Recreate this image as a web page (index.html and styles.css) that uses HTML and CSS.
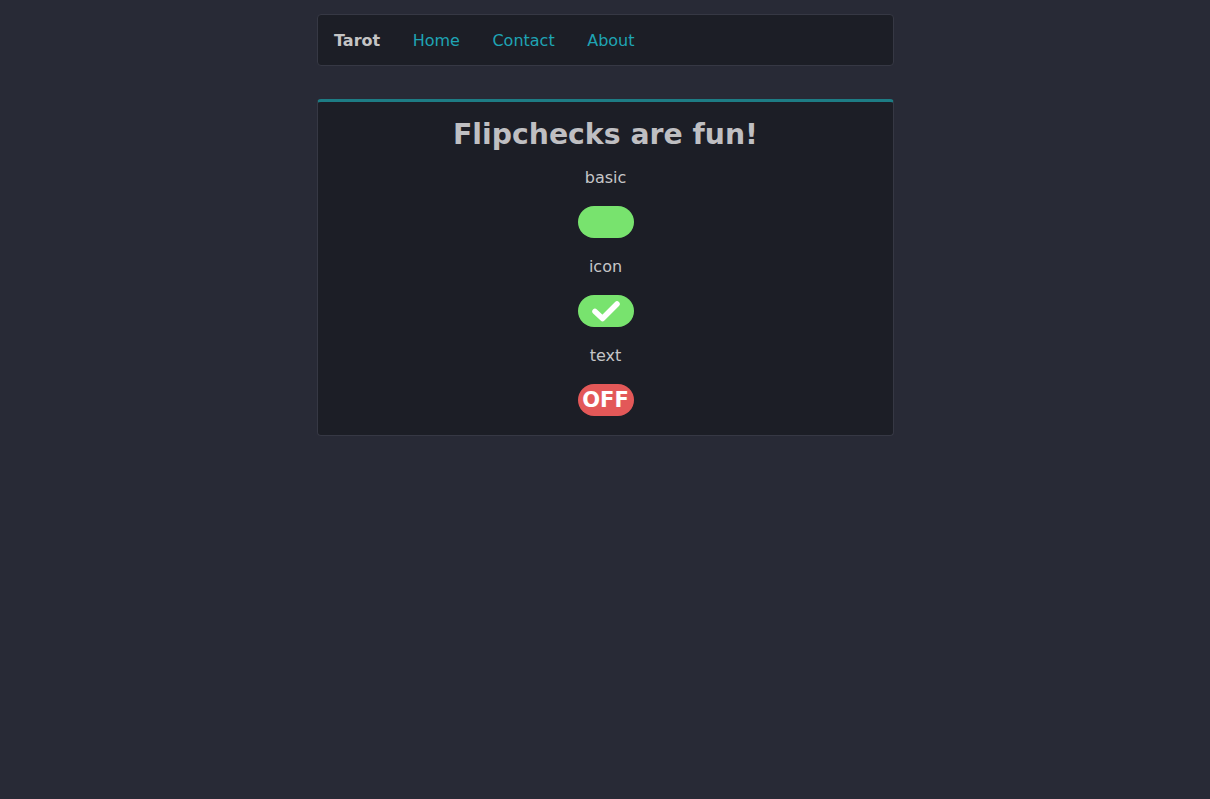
FILE: index.html
```html
<!DOCTYPE html>
<html>
<head>
<meta charset="utf-8">
<link rel="stylesheet" href="styles.css">
</head>
<body>
<div class="container">
  <nav class="navbar">
    <span class="brand">Tarot</span>
    <a class="nav-link" href="#">Home</a>
    <a class="nav-link" href="#">Contact</a>
    <a class="nav-link" href="#">About</a>
  </nav>
  <section class="card">
    <h1 class="title">Flipchecks are fun!</h1>
    <div class="label">basic</div>
    <div class="toggle toggle-on"></div>
    <div class="label">icon</div>
    <div class="toggle toggle-on">
      <svg class="check" viewBox="0 0 30 24" width="30" height="24"><path d="M4 12.5 L11.5 19.5 L26 5" fill="none" stroke="#fff" stroke-width="5.5" stroke-linecap="round" stroke-linejoin="round"/></svg>
    </div>
    <div class="label">text</div>
    <div class="toggle toggle-off"><span class="toggle-text">OFF</span></div>
  </section>
</div>
</body>
</html>
```
FILE: styles.css
```css
html, body {
  margin: 0;
  padding: 0;
  background: #282a36;
  font-family: "DejaVu Sans", sans-serif;
}
body {
  padding-top: 14px;
}
.container {
  width: 577px;
  margin: 0 auto;
  padding-left: 1px;
}
.navbar {
  display: flex;
  align-items: center;
  height: 50px;
  padding: 0 16px;
  background: #1c1e26;
  border: 1px solid #363844;
  border-radius: 4px;
  gap: 32.5px;
}
.brand {
  font-weight: bold;
  font-size: 16px;
  color: #c4c4c4;
}
.nav-link {
  color: #1fa4b4;
  text-decoration: none;
  font-size: 16px;
}
.card {
  margin-top: 33px;
  background: #1c1e26;
  border: 1px solid #363844;
  border-top: 3px solid #1d7c84;
  border-radius: 4px;
  padding: 16px 16px 19px;
  display: flex;
  flex-direction: column;
  align-items: center;
}
.title {
  margin: 0 0 14px;
  font-size: 28.3px;
  line-height: 34px;
  font-weight: bold;
  color: #bfbfc2;
}
.label {
  font-size: 16px;
  line-height: 24px;
  color: #c6c6c8;
  margin-bottom: 16px;
}
.toggle {
  width: 56px;
  height: 32px;
  border-radius: 16px;
  margin-bottom: 17px;
  display: flex;
  align-items: center;
  justify-content: center;
}
.toggle:last-child {
  margin-bottom: 0;
}
.toggle-on {
  background: #78e36e;
}
.toggle-off {
  background: #e35858;
}
.toggle-text {
  color: #fff;
  font-weight: bold;
  font-size: 21px;
  line-height: 32px;
}
.check {
  display: block;
}
```
